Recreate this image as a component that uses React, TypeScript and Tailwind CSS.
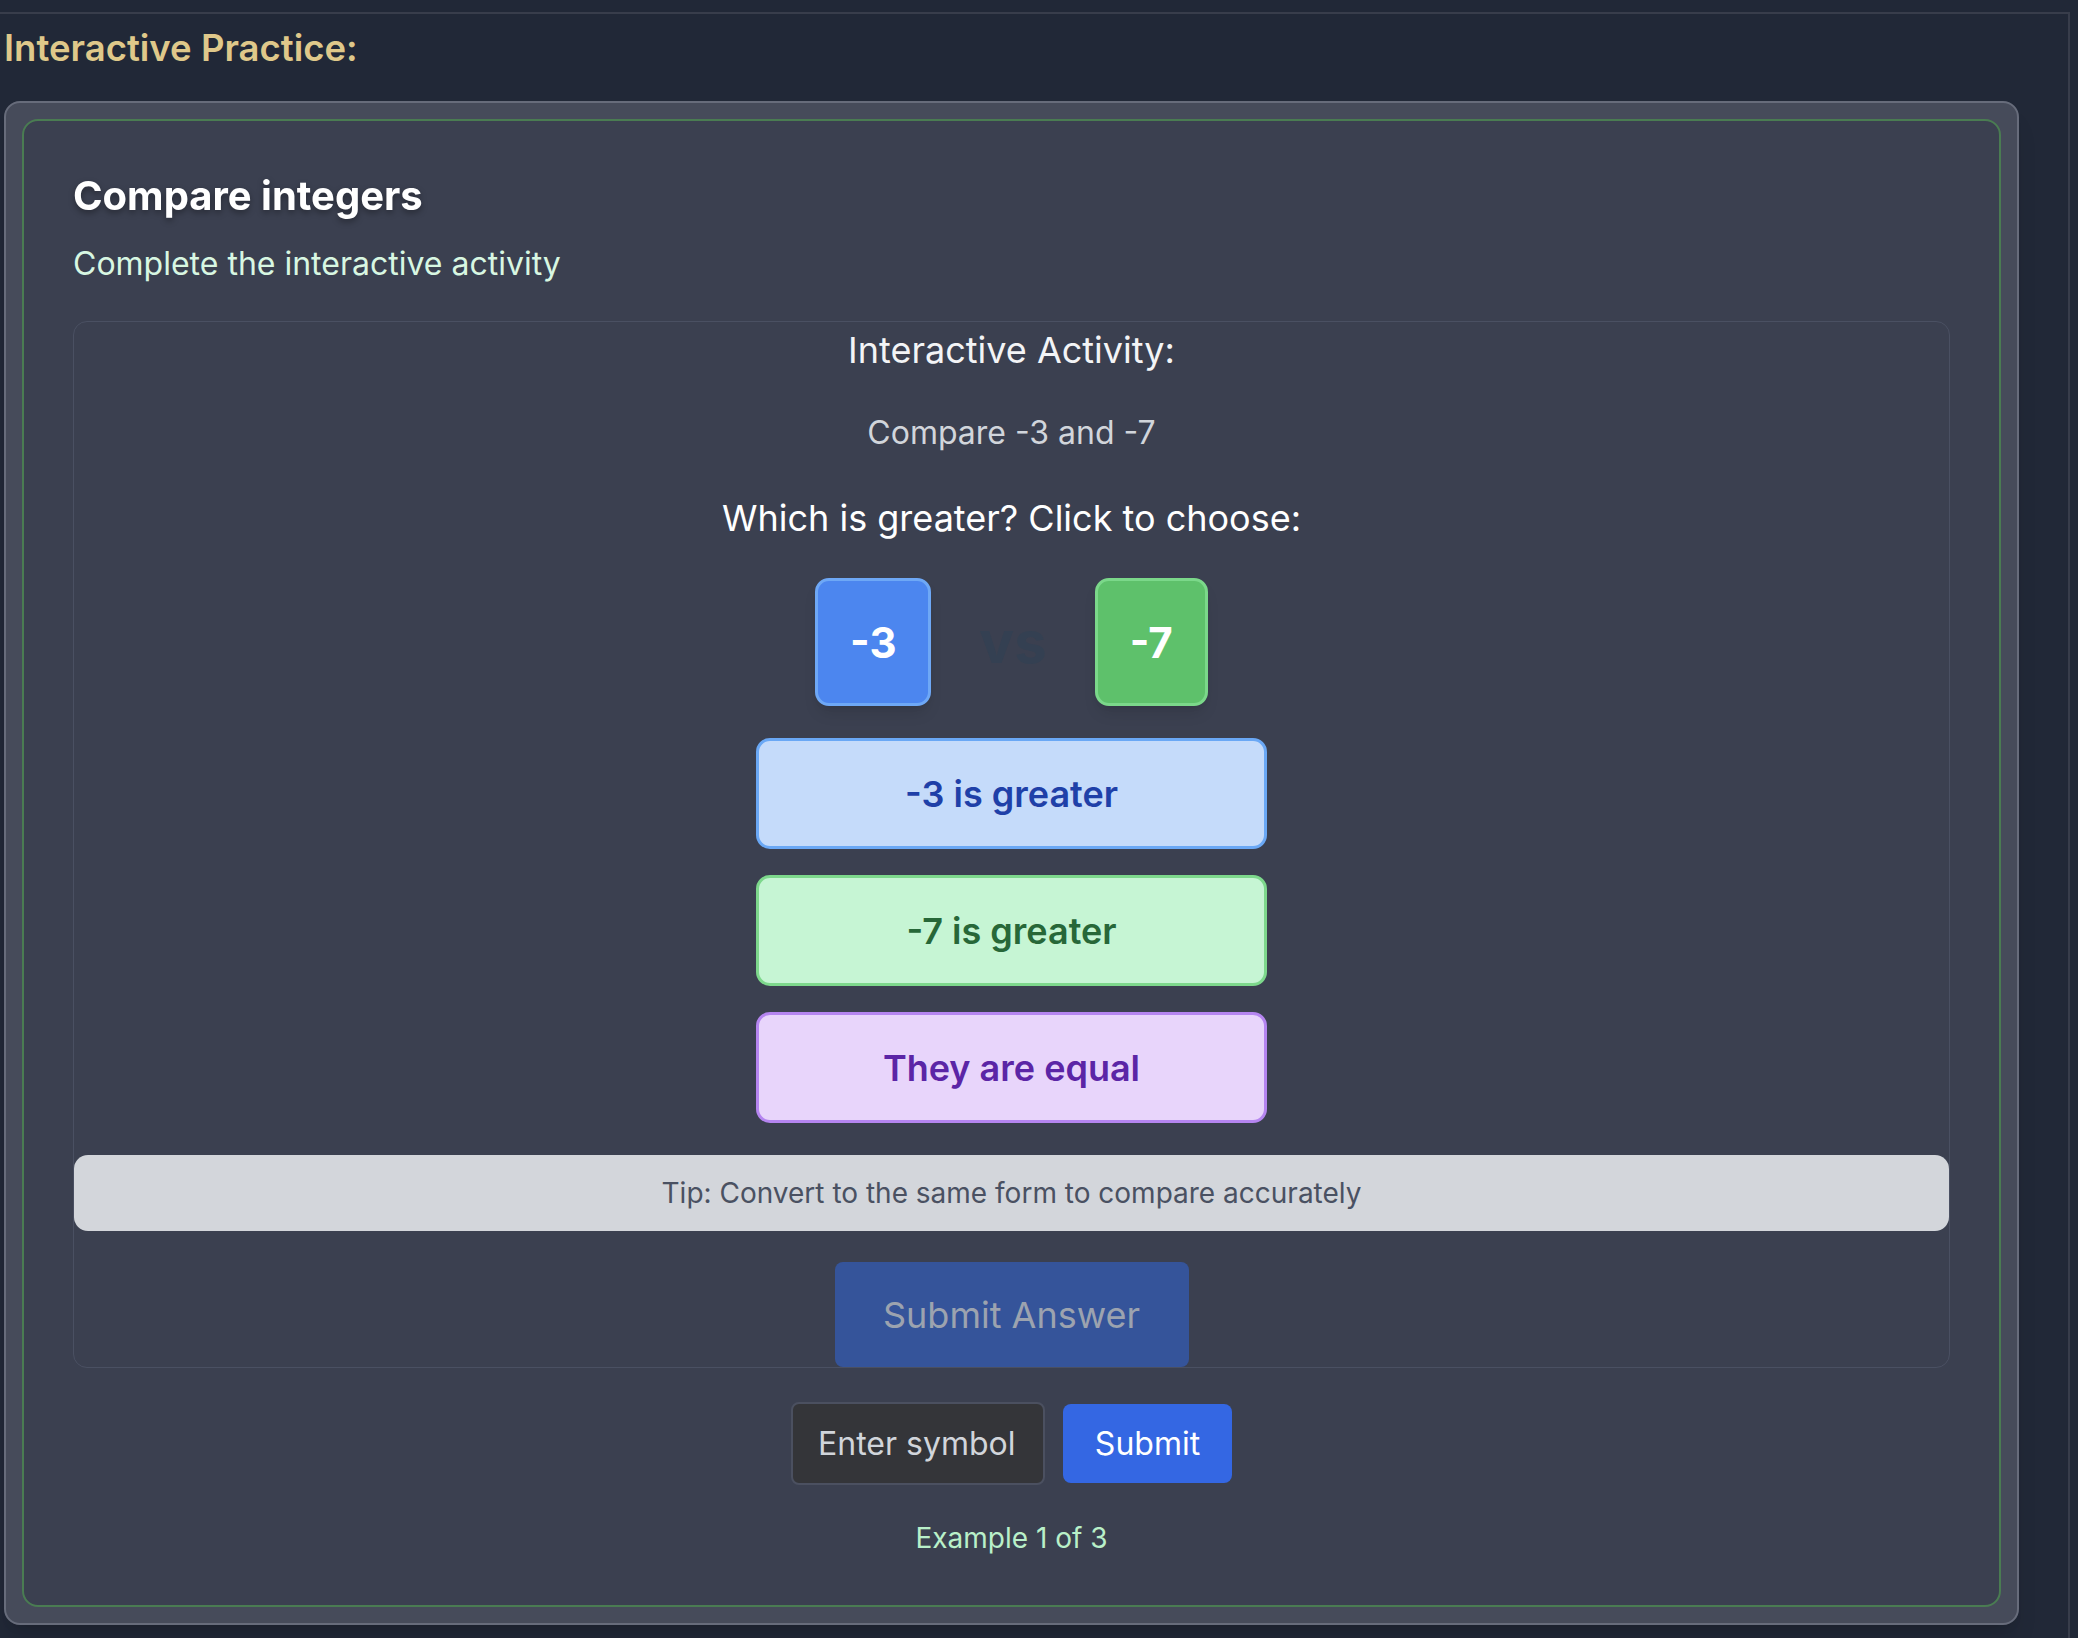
const options = [
  { label: '-3 is greater', cls: 'bg-[#c5dbfa] border-[#6aa8f5] text-[#1f40a8]' },
  { label: '-7 is greater', cls: 'bg-[#c6f5d4] border-[#7dd88c] text-[#276738]' },
  { label: 'They are equal', cls: 'bg-[#e8d5fb] border-[#b585f0] text-[#5b25a6]' },
];

function NumberTile({ value, cls }: { value: string; cls: string }) {
  return (
    <div className={`flex h-[128px] items-center justify-center rounded-[14px] border-[3px] text-[42px] font-bold text-white shadow-lg ${cls}`}>
      {value}
    </div>
  );
}

export default function App() {
  return (
    <div className="min-h-screen w-full bg-[#212837] pt-[12px] font-['Inter',sans-serif]">
      <div className="w-[2070px] border-t-2 border-r-2 border-[#383d4b] pl-[4px] pt-[12px] pb-[13px]">
        <h2 className="mb-[31px] text-[36.5px] leading-[44px] font-semibold text-[#dfc88a]">Interactive Practice:</h2>

        <div className="w-[2015px] rounded-[16px] border-2 border-[#676c7b] bg-[#464b5a] p-[16px] shadow-xl">
          <div className="rounded-[16px] border-2 border-[#4a7c52] bg-[#3b4050] px-[49px] pt-[52px] pb-[49px]">
            <h3 className="text-[40px] leading-[46px] font-bold text-white drop-shadow-[0_3px_3px_rgba(0,0,0,0.35)]">Compare integers</h3>
            <p className="mt-[25px] text-[32px] leading-[40px] text-[#d8f7e2]">Complete the interactive activity</p>

            <div className="mt-[37px] flex flex-col items-center rounded-[14px] border border-[#4a5062] pt-[8px]">
              <div className="text-[36px] leading-[40px] text-[#f3f4f6]">Interactive Activity:</div>
              <div className="mt-[43px] text-[32px] leading-[40px] text-[#d1d5db]">Compare -3 and -7</div>
              <div className="mt-[45px] text-[36px] leading-[40px] text-white">Which is greater? Click to choose:</div>

              <div className="mt-[40px] flex items-center gap-[48px]">
                <NumberTile value="-3" cls="w-[116px] bg-[#4c86ef] border-[#6ea8f6]" />
                <span className="text-[58px] leading-[60px] font-bold text-[#344052]">vs</span>
                <NumberTile value="-7" cls="w-[113px] bg-[#5ec16b] border-[#7bd88a]" />
              </div>

              <div className="mt-[32px] flex flex-col gap-[26px]">
                {options.map(o => (
                  <button key={o.label} className={`flex h-[111px] w-[511px] items-center justify-center rounded-[14px] border-[3px] text-[36px] font-semibold ${o.cls}`}>
                    {o.label}
                  </button>
                ))}
              </div>

              <div className="mt-[32px] flex h-[76px] w-full items-center justify-center rounded-[14px] bg-[#d3d6db] text-[28px] text-[#4a5162]">
                Tip: Convert to the same form to compare accurately
              </div>

              <button className="mt-[31px] h-[105px] w-[354px] rounded-[8px] bg-[#35549a] text-[36px] text-[#9ca3af]">Submit Answer</button>
            </div>

            <div className="mt-[34px] flex items-center justify-center gap-[18px]">
              <input
                placeholder="Enter symbol"
                className="h-[83px] w-[254px] rounded-[8px] border-2 border-[#4b5060] bg-[#343539] px-[25px] text-[32px] text-[#e5e7eb] placeholder:text-[#d1d5db] outline-none"
              />
              <button className="h-[79px] w-[169px] rounded-[8px] bg-[#3467e3] text-[32px] text-white">Submit</button>
            </div>

            <p className="mt-[35px] text-center text-[28px] leading-[36px] text-[#b9f0c9]">Example 1 of 3</p>
          </div>
        </div>
      </div>
    </div>
  );
}
